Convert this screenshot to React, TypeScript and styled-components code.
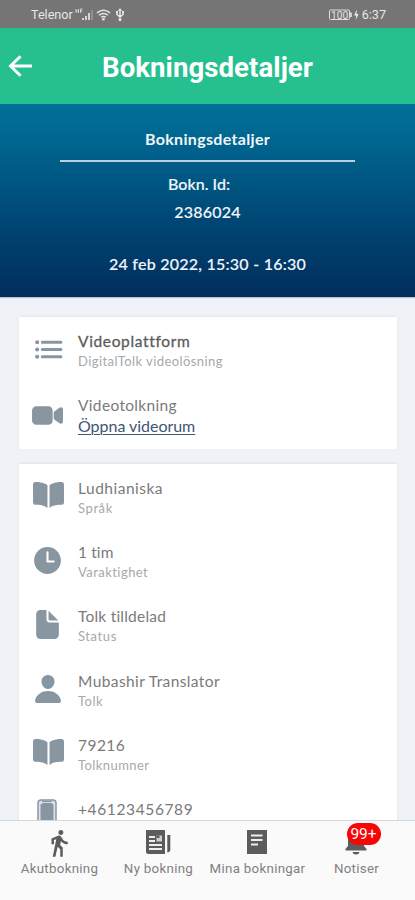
import React from 'react';
import styled, { createGlobalStyle } from 'styled-components';
import { IoBook, IoDocument, IoList, IoPerson, IoTime, IoVideocam } from 'react-icons/io5';
import { MdDirectionsWalk } from 'react-icons/md';

const GlobalStyle = createGlobalStyle`
  * { box-sizing: border-box; }
  html, body { margin: 0; padding: 0; }
  body { overflow: hidden; background: #eff2f6; }
`;

const Screen = styled.div`
  width: 415px;
  height: 900px;
  display: flex;
  flex-direction: column;
  overflow: hidden;
  background: #eff2f6;
  font-family: Lato, "Open Sans", sans-serif;
`;

const StatusBar = styled.div`
  height: 28px;
  flex: none;
  display: flex;
  align-items: center;
  justify-content: space-between;
  padding: 2px 29px 0 31px;
  background: #757575;
  color: #e6e6e6;
  font: 12.6px/16px Roboto, sans-serif;
`;

const StatusGroup = styled.div`
  display: flex;
  align-items: center;
`;

const StatusText = styled.span<{ $track?: number }>`
  letter-spacing: ${(p) => p.$track ?? 0}px;
`;

const TopBar = styled.header`
  height: 76px;
  flex: none;
  display: grid;
  grid-template-columns: 40px 1fr 40px;
  align-items: center;
  background: #26bf8f;
`;

const BackButton = styled.button`
  padding: 0 0 0 7px;
  border: 0;
  background: none;
  display: flex;
`;

const PageTitle = styled.h1<{ $track: number }>`
  margin: 0;
  padding-top: 3px;
  text-align: center;
  color: #fff;
  font: 700 27.6px/36px Roboto, sans-serif;
  letter-spacing: ${(p) => p.$track}px;
`;

const Hero = styled.section`
  height: 193px;
  flex: none;
  display: flex;
  flex-direction: column;
  align-items: center;
  padding-top: 25px;
  color: #f2f6fa;
  background: linear-gradient(#027098 0%, #006690 18%, #00406f 70%, #022e5b 100%);
  box-shadow: 0 1px 1px #b5c3d6;
`;

const HeroTitle = styled.h2<{ $track: number }>`
  margin: 0;
  width: 295px;
  height: 33px;
  border-bottom: 2px solid #b9d2df;
  text-align: center;
  font-size: 16px;
  line-height: 20px;
  font-weight: 700;
  letter-spacing: ${(p) => p.$track}px;
`;

const HeroLine = styled.div<{ $gap: number; $track: number; $shift?: number }>`
  margin-top: ${(p) => p.$gap}px;
  padding-right: ${(p) => p.$shift ?? 0}px;
  font-size: 16px;
  line-height: 20px;
  font-weight: 500;
  -webkit-text-stroke: 0.15px currentColor;
  letter-spacing: ${(p) => p.$track}px;
`;

const Content = styled.main`
  flex: 1;
  min-height: 0;
  overflow: hidden;
  display: flex;
  flex-direction: column;
  gap: 15px;
  padding: 20px 18px 0 19px;
`;

const Card = styled.section`
  flex: none;
  padding-bottom: 3.6px;
  background: #fff;
  box-shadow: 0 -1px 2px #e2e4e7;
`;

const Row = styled.div`
  height: 64.2px;
  display: grid;
  grid-template-columns: 59px 1fr;
`;

const IconCell = styled.div<{ $top: number; $nudge?: number }>`
  display: flex;
  justify-content: center;
  align-items: flex-start;
  padding-top: ${(p) => p.$top}px;
  padding-right: ${(p) => p.$nudge ?? 0}px;
  color: #8896a2;
`;

const RowText = styled.div`
  padding-top: 14px;
  white-space: nowrap;
`;

const Primary = styled.div<{ $track: number; $strong?: boolean }>`
  font-size: 15.5px;
  line-height: 20px;
  color: ${(p) => (p.$strong ? '#5c5c5c' : '#7a7a7a')};
  -webkit-text-stroke: ${(p) => (p.$strong ? 0.3 : 0)}px currentColor;
  letter-spacing: ${(p) => p.$track}px;
`;

const Secondary = styled.div<{ $track: number }>`
  font-size: 13px;
  line-height: 20px;
  color: #a5a9ac;
  letter-spacing: ${(p) => p.$track}px;
`;

const RoomLink = styled.a<{ $track: number }>`
  display: block;
  width: fit-content;
  font-size: 16px;
  line-height: 22px;
  color: #3d5674;
  text-decoration: underline;
  text-underline-offset: 2px;
  text-decoration-thickness: 1px;
  letter-spacing: ${(p) => p.$track}px;
`;

const TabBar = styled.nav`
  height: 80px;
  flex: none;
  display: grid;
  grid-template-columns: repeat(4, 99px);
  padding-left: 10px;
  border-top: 1px solid #d0d7de;
  background: #fafafa;
`;

const Tab = styled.div`
  display: flex;
  flex-direction: column;
  align-items: center;
  color: #5c5c5c;
`;

const TabIcon = styled.div`
  position: relative;
  height: 38px;
  padding-top: 7px;
  margin-right: 2px;
  display: flex;
`;

const TabLabel = styled.span<{ $track: number }>`
  font: 13.3px/20px Roboto, sans-serif;
  color: #808080;
  white-space: nowrap;
  letter-spacing: ${(p) => p.$track}px;
`;

const Badge = styled.span`
  position: absolute;
  left: 2px;
  top: 2px;
  width: 34px;
  height: 22px;
  border-radius: 11px;
  background: #f80505;
  color: #fff;
  text-align: center;
  font: 15.5px/23px Roboto, sans-serif;
`;

const SignalIcons = () => (
  <svg width="54" height="16" viewBox="0 0 54 16" fill="#e6e6e6">
    <path d="M3 2v4M5.500 2v4M3 4h2.500M7.500 2v4M7.500 2h2M7.500 4h2" stroke="#ddd" strokeWidth=".9" fill="none" />
    <path d="M9 11h2v2H9zM12 9h2v4h-2zM15 6h2v7h-2z" opacity=".85" />
    <path d="M18 3h2v10h-2z" opacity=".25" />
    <g fill="none" stroke="#e6e6e6" strokeWidth="1.500">
      <path d="M24 5.800q6.500-5 13 0M26.200 8.200q4.300-3.300 8.600 0M28.300 10.400q2.200-1.600 4.400 0" />
      <path d="M47 3v10M44 5.500v2l3 2.500 3-2.500v-2" />
    </g>
    <circle cx="30.500" cy="12.300" r="1.300" />
    <path d="M47 1l2 3h-4zM45.700 11.500h2.600v2.500h-2.600zM43 4h2v2h-2zM49 4h2v2h-2z" />
  </svg>
);

const BatteryIcon = () => (
  <svg width="33" height="16" viewBox="0 0 33 16">
    <rect x=".5" y="3" width="20" height="9.500" rx="1" fill="none" stroke="#ddd" />
    <path d="M21 5.500h1.800v4.500H21z" fill="#ddd" />
    <text x="2" y="11.500" fontSize="10.200" fontFamily="Roboto, sans-serif" fill="#e4e4e4">100</text>
    <path d="M27.800 2.500l-2.600 6h2l-.5 4.500 2.800-6h-2z" fill="#eee" />
  </svg>
);

const BackArrow = () => (
  <svg width="26" height="26" viewBox="0 0 26 26" fill="none" stroke="#fff" strokeWidth="3">
    <path d="M25 13H4M13.500 3.200L3.500 13l10 9.800" />
  </svg>
);

const PhoneIcon = () => (
  <svg width="20" height="30" viewBox="0 0 20 30">
    <rect x="1" y="1" width="18" height="28" rx="3" fill="#dce2e7" stroke="#8896a2" strokeWidth="1.500" />
    <path d="M3.500 5.500L6 4h8l2.500 1.500V26h-13z" fill="#8896a2" />
    <path d="M5 2.500h10" stroke="#8896a2" strokeWidth="1.200" />
  </svg>
);

const NewsIcon = () => (
  <svg width="26" height="28" viewBox="0 0 26 28">
    <path d="M1 2h19v24H3.500Q1 26 1 23.500z" fill="#5c5c5c" />
    <path d="M22.300 7h3v14.500q0 2.500-3 3z" fill="#5c5c5c" />
    <path d="M4 9h6M4 13h6M4 17h13M4 21h13" stroke="#eee" strokeWidth="1.800" />
    <path d="M11.500 7.500h5.500v6h-5.500z" fill="#d0d0d0" />
    <path d="M11.500 7.500h3v2.500h-3z" fill="#5c5c5c" />
  </svg>
);

const PaperIcon = () => (
  <svg width="20" height="28" viewBox="0 0 20 28">
    <path d="M0 2h20v24H0z" fill="#5c5c5c" />
    <path d="M4 7.500h11.500M4 12h11.500M4 16.500h7" stroke="#eee" strokeWidth="2" />
  </svg>
);

const BellIcon = () => (
  <svg width="22" height="28" viewBox="0 0 22 28" fill="#5c5c5c">
    <path d="M3 18v-6q0-6.500 6.300-8V2.500h3.400V4Q19 5.500 19 12v6l2.500 3v1.500H.5V21zM7.500 24h7q-.5 2.500-3.500 2.500T7.500 24z" />
  </svg>
);

type Detail = {
  icon: React.ReactNode;
  top: number;
  nudge?: number;
  title: string;
  titleTrack: number;
  caption?: string;
  captionTrack?: number;
};

const details: Detail[] = [
  { icon: <IoBook size={33} />, top: 15, nudge: 1, title: 'Ludhianiska', titleTrack: 0.5, caption: 'Språk', captionTrack: 0.6 },
  { icon: <IoTime size={33} />, top: 16, nudge: 2, title: '1 tim', titleTrack: 0.1, caption: 'Varaktighet', captionTrack: 0.45 },
  { icon: <IoDocument size={33} />, top: 16, nudge: 3, title: 'Tolk tilldelad', titleTrack: 0.22, caption: 'Status', captionTrack: 0.6 },
  { icon: <IoPerson size={32} />, top: 16, nudge: 1, title: 'Mubashir Translator', titleTrack: 0.4, caption: 'Tolk', captionTrack: 0.5 },
  { icon: <IoBook size={33} />, top: 15, nudge: 1, title: '79216', titleTrack: 0.45, caption: 'Tolknumner', captionTrack: 0.42 },
  { icon: <PhoneIcon />, top: 14, nudge: 3, title: '+46123456789', titleTrack: 0.62 },
];

export default function App() {
  return (
    <>
      <GlobalStyle />
      <Screen>
        <StatusBar>
          <StatusGroup>
            <StatusText>Telenor</StatusText>
            <SignalIcons />
          </StatusGroup>
          <StatusGroup>
            <BatteryIcon />
            <StatusText>6:37</StatusText>
          </StatusGroup>
        </StatusBar>
        <TopBar>
          <BackButton aria-label="Tillbaka">
            <BackArrow />
          </BackButton>
          <PageTitle $track={0.05}>Bokningsdetaljer</PageTitle>
        </TopBar>
        <Hero>
          <HeroTitle $track={0.33}>Bokningsdetaljer</HeroTitle>
          <HeroLine $gap={12} $track={0.05} $shift={17}>Bokn. Id:</HeroLine>
          <HeroLine $gap={8} $track={0.25}>2386024</HeroLine>
          <HeroLine $gap={32} $track={0.25}>24 feb 2022, 15:30 - 16:30</HeroLine>
        </Hero>
        <Content>
          <Card>
            <Row>
              <IconCell $top={16} $nudge={1}><IoList size={33} /></IconCell>
              <RowText>
                <Primary $strong $track={0.65}>Videoplattform</Primary>
                <Secondary $track={0.42}>DigitalTolk videolösning</Secondary>
              </RowText>
            </Row>
            <Row>
              <IconCell $top={18} $nudge={2}><IoVideocam size={33} /></IconCell>
              <RowText>
                <Primary $track={0.33}>Videotolkning</Primary>
                <RoomLink $track={-0.03}>Öppna videorum</RoomLink>
              </RowText>
            </Row>
          </Card>
          <Card>
            {details.map((d) => (
              <Row key={d.title}>
                <IconCell $top={d.top} $nudge={d.nudge}>{d.icon}</IconCell>
                <RowText>
                  <Primary $track={d.titleTrack}>{d.title}</Primary>
                  {d.caption && <Secondary $track={d.captionTrack ?? 0}>{d.caption}</Secondary>}
                </RowText>
              </Row>
            ))}
          </Card>
        </Content>
        <TabBar>
          <Tab>
            <TabIcon><MdDirectionsWalk size={30} /></TabIcon>
            <TabLabel $track={0.3}>Akutbokning</TabLabel>
          </Tab>
          <Tab>
            <TabIcon><NewsIcon /></TabIcon>
            <TabLabel $track={0.3}>Ny bokning</TabLabel>
          </Tab>
          <Tab>
            <TabIcon><PaperIcon /></TabIcon>
            <TabLabel $track={0.3}>Mina bokningar</TabLabel>
          </Tab>
          <Tab>
            <TabIcon>
              <BellIcon />
              <Badge>99+</Badge>
            </TabIcon>
            <TabLabel $track={0.3}>Notiser</TabLabel>
          </Tab>
        </TabBar>
      </Screen>
    </>
  );
}
